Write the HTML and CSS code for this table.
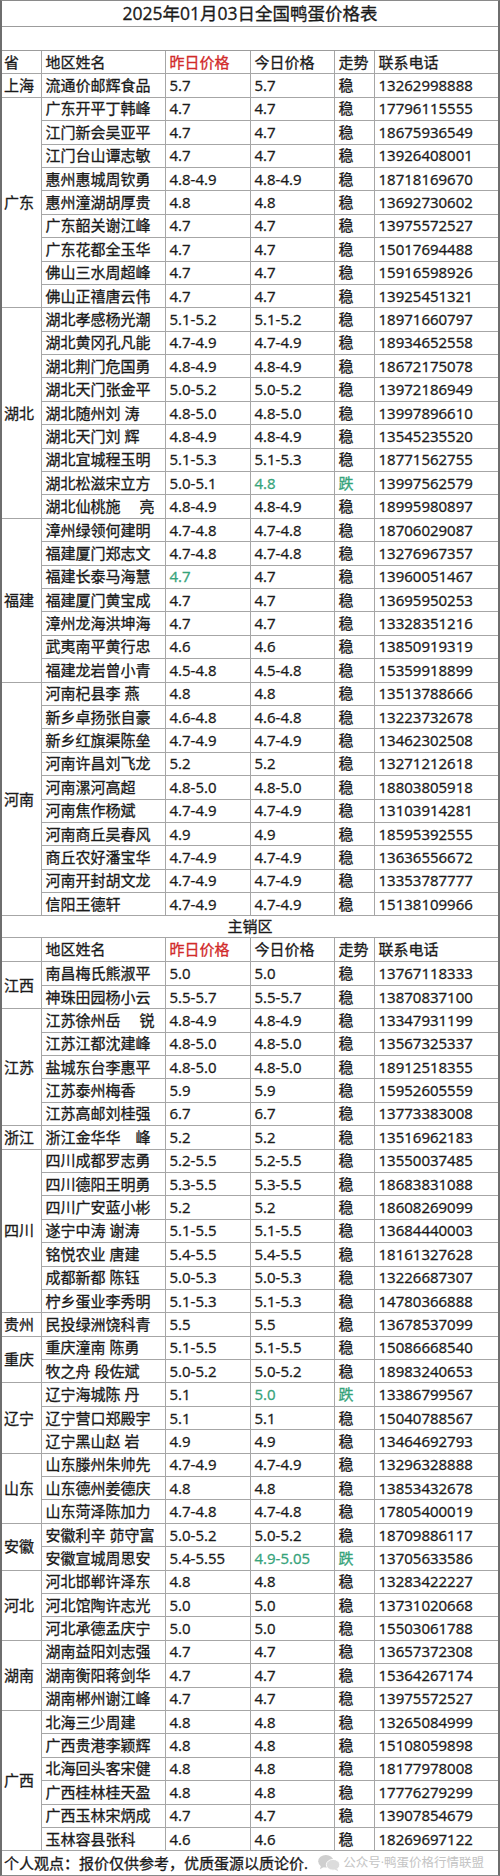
FILE: index.html
```html
<!DOCTYPE html>
<html lang="zh-CN">
<head>
<meta charset="utf-8">
<title>2025年01月03日全国鸭蛋价格表</title>
<link rel="stylesheet" href="styles.css">
</head>
<body>
<div class="sheet">
  <div class="title">2025年01月03日全国鸭蛋价格表</div>
  <div class="blank"></div>

  <div class="grid">
    <div class="c prov">省</div><div class="c">地区姓名</div><div class="c red">昨日价格</div><div class="c">今日价格</div><div class="c">走势</div><div class="c ph">联系电话</div>

    <div class="c prov">上海</div><div class="c">流通价邮辉食品</div><div class="c">5.7</div><div class="c">5.7</div><div class="c">稳</div><div class="c ph">13262998888</div>

    <div class="c prov s9">广东</div>
    <div class="c">广东开平丁韩峰</div><div class="c">4.7</div><div class="c">4.7</div><div class="c">稳</div><div class="c ph">17796115555</div>
    <div class="c">江门新会吴亚平</div><div class="c">4.7</div><div class="c">4.7</div><div class="c">稳</div><div class="c ph">18675936549</div>
    <div class="c">江门台山谭志敏</div><div class="c">4.7</div><div class="c">4.7</div><div class="c">稳</div><div class="c ph">13926408001</div>
    <div class="c">惠州惠城周钦勇</div><div class="c">4.8-4.9</div><div class="c">4.8-4.9</div><div class="c">稳</div><div class="c ph">18718169670</div>
    <div class="c">惠州潼湖胡厚贵</div><div class="c">4.8</div><div class="c">4.8</div><div class="c">稳</div><div class="c ph">13692730602</div>
    <div class="c">广东韶关谢江峰</div><div class="c">4.7</div><div class="c">4.7</div><div class="c">稳</div><div class="c ph">13975572527</div>
    <div class="c">广东花都全玉华</div><div class="c">4.7</div><div class="c">4.7</div><div class="c">稳</div><div class="c ph">15017694488</div>
    <div class="c">佛山三水周超峰</div><div class="c">4.7</div><div class="c">4.7</div><div class="c">稳</div><div class="c ph">15916598926</div>
    <div class="c">佛山正禧唐云伟</div><div class="c">4.7</div><div class="c">4.7</div><div class="c">稳</div><div class="c ph">13925451321</div>

    <div class="c prov s9">湖北</div>
    <div class="c">湖北孝感杨光潮</div><div class="c">5.1-5.2</div><div class="c">5.1-5.2</div><div class="c">稳</div><div class="c ph">18971660797</div>
    <div class="c">湖北黄冈孔凡能</div><div class="c">4.7-4.9</div><div class="c">4.7-4.9</div><div class="c">稳</div><div class="c ph">18934652558</div>
    <div class="c">湖北荆门危国勇</div><div class="c">4.8-4.9</div><div class="c">4.8-4.9</div><div class="c">稳</div><div class="c ph">18672175078</div>
    <div class="c">湖北天门张金平</div><div class="c">5.0-5.2</div><div class="c">5.0-5.2</div><div class="c">稳</div><div class="c ph">13972186949</div>
    <div class="c">湖北随州刘 涛</div><div class="c">4.8-5.0</div><div class="c">4.8-5.0</div><div class="c">稳</div><div class="c ph">13997896610</div>
    <div class="c">湖北天门刘 辉</div><div class="c">4.8-4.9</div><div class="c">4.8-4.9</div><div class="c">稳</div><div class="c ph">13545235520</div>
    <div class="c">湖北宜城程玉明</div><div class="c">5.1-5.3</div><div class="c">5.1-5.3</div><div class="c">稳</div><div class="c ph">18771562755</div>
    <div class="c">湖北松滋宋立方</div><div class="c">5.0-5.1</div><div class="c green">4.8</div><div class="c green">跌</div><div class="c ph">13997562579</div>
    <div class="c">湖北仙桃施　 亮</div><div class="c">4.8-4.9</div><div class="c">4.8-4.9</div><div class="c">稳</div><div class="c ph">18995980897</div>

    <div class="c prov s7">福建</div>
    <div class="c">漳州绿领何建明</div><div class="c">4.7-4.8</div><div class="c">4.7-4.8</div><div class="c">稳</div><div class="c ph">18706029087</div>
    <div class="c">福建厦门郑志文</div><div class="c">4.7-4.8</div><div class="c">4.7-4.8</div><div class="c">稳</div><div class="c ph">13276967357</div>
    <div class="c">福建长泰马海慧</div><div class="c green">4.7</div><div class="c">4.7</div><div class="c">稳</div><div class="c ph">13960051467</div>
    <div class="c">福建厦门黄宝成</div><div class="c">4.7</div><div class="c">4.7</div><div class="c">稳</div><div class="c ph">13695950253</div>
    <div class="c">漳州龙海洪坤海</div><div class="c">4.7</div><div class="c">4.7</div><div class="c">稳</div><div class="c ph">13328351216</div>
    <div class="c">武夷南平黄行忠</div><div class="c">4.6</div><div class="c">4.6</div><div class="c">稳</div><div class="c ph">13850919319</div>
    <div class="c">福建龙岩曾小青</div><div class="c">4.5-4.8</div><div class="c">4.5-4.8</div><div class="c">稳</div><div class="c ph">15359918899</div>

    <div class="c prov s10">河南</div>
    <div class="c">河南杞县李 燕</div><div class="c">4.8</div><div class="c">4.8</div><div class="c">稳</div><div class="c ph">13513788666</div>
    <div class="c">新乡卓扬张自豪</div><div class="c">4.6-4.8</div><div class="c">4.6-4.8</div><div class="c">稳</div><div class="c ph">13223732678</div>
    <div class="c">新乡红旗渠陈垒</div><div class="c">4.7-4.9</div><div class="c">4.7-4.9</div><div class="c">稳</div><div class="c ph">13462302508</div>
    <div class="c">河南许昌刘飞龙</div><div class="c">5.2</div><div class="c">5.2</div><div class="c">稳</div><div class="c ph">13271212618</div>
    <div class="c">河南漯河高超</div><div class="c">4.8-5.0</div><div class="c">4.8-5.0</div><div class="c">稳</div><div class="c ph">18803805918</div>
    <div class="c">河南焦作杨斌</div><div class="c">4.7-4.9</div><div class="c">4.7-4.9</div><div class="c">稳</div><div class="c ph">13103914281</div>
    <div class="c">河南商丘吴春风</div><div class="c">4.9</div><div class="c">4.9</div><div class="c">稳</div><div class="c ph">18595392555</div>
    <div class="c">商丘农好潘宝华</div><div class="c">4.7-4.9</div><div class="c">4.7-4.9</div><div class="c">稳</div><div class="c ph">13636556672</div>
    <div class="c">河南开封胡文龙</div><div class="c">4.7-4.9</div><div class="c">4.7-4.9</div><div class="c">稳</div><div class="c ph">13353787777</div>
    <div class="c">信阳王德轩</div><div class="c">4.7-4.9</div><div class="c">4.7-4.9</div><div class="c">稳</div><div class="c ph">15138109966</div>
  </div>

  <div class="section">主销区</div>

  <div class="grid grid-b">
    <div class="c prov"></div><div class="c">地区姓名</div><div class="c red">昨日价格</div><div class="c">今日价格</div><div class="c">走势</div><div class="c ph">联系电话</div>

    <div class="c prov s2">江西</div>
    <div class="c">南昌梅氏熊淑平</div><div class="c">5.0</div><div class="c">5.0</div><div class="c">稳</div><div class="c ph">13767118333</div>
    <div class="c">神珠田园杨小云</div><div class="c">5.5-5.7</div><div class="c">5.5-5.7</div><div class="c">稳</div><div class="c ph">13870837100</div>

    <div class="c prov s5">江苏</div>
    <div class="c">江苏徐州岳　 锐</div><div class="c">4.8-4.9</div><div class="c">4.8-4.9</div><div class="c">稳</div><div class="c ph">13347931199</div>
    <div class="c">江苏江都沈建峰</div><div class="c">4.8-5.0</div><div class="c">4.8-5.0</div><div class="c">稳</div><div class="c ph">13567325337</div>
    <div class="c">盐城东台李惠平</div><div class="c">4.8-5.0</div><div class="c">4.8-5.0</div><div class="c">稳</div><div class="c ph">18912518355</div>
    <div class="c">江苏泰州梅香</div><div class="c">5.9</div><div class="c">5.9</div><div class="c">稳</div><div class="c ph">15952605559</div>
    <div class="c">江苏高邮刘桂强</div><div class="c">6.7</div><div class="c">6.7</div><div class="c">稳</div><div class="c ph">13773383008</div>

    <div class="c prov">浙江</div>
    <div class="c">浙江金华华　峰</div><div class="c">5.2</div><div class="c">5.2</div><div class="c">稳</div><div class="c ph">13516962183</div>

    <div class="c prov s7">四川</div>
    <div class="c">四川成都罗志勇</div><div class="c">5.2-5.5</div><div class="c">5.2-5.5</div><div class="c">稳</div><div class="c ph">13550037485</div>
    <div class="c">四川德阳王明勇</div><div class="c">5.3-5.5</div><div class="c">5.3-5.5</div><div class="c">稳</div><div class="c ph">18683831088</div>
    <div class="c">四川广安蓝小彬</div><div class="c">5.2</div><div class="c">5.2</div><div class="c">稳</div><div class="c ph">18608269099</div>
    <div class="c">遂宁中涛 谢涛</div><div class="c">5.1-5.5</div><div class="c">5.1-5.5</div><div class="c">稳</div><div class="c ph">13684440003</div>
    <div class="c">铭悦农业 唐建</div><div class="c">5.4-5.5</div><div class="c">5.4-5.5</div><div class="c">稳</div><div class="c ph">18161327628</div>
    <div class="c">成都新都 陈钰</div><div class="c">5.0-5.3</div><div class="c">5.0-5.3</div><div class="c">稳</div><div class="c ph">13226687307</div>
    <div class="c">柠乡蛋业李秀明</div><div class="c">5.1-5.3</div><div class="c">5.1-5.3</div><div class="c">稳</div><div class="c ph">14780366888</div>

    <div class="c prov">贵州</div>
    <div class="c">民投绿洲饶科青</div><div class="c">5.5</div><div class="c">5.5</div><div class="c">稳</div><div class="c ph">13678537099</div>

    <div class="c prov s2">重庆</div>
    <div class="c">重庆潼南 陈勇</div><div class="c">5.1-5.5</div><div class="c">5.1-5.5</div><div class="c">稳</div><div class="c ph">15086668540</div>
    <div class="c">牧之舟 段佐斌</div><div class="c">5.0-5.2</div><div class="c">5.0-5.2</div><div class="c">稳</div><div class="c ph">18983240653</div>

    <div class="c prov s3">辽宁</div>
    <div class="c">辽宁海城陈 丹</div><div class="c">5.1</div><div class="c green">5.0</div><div class="c green">跌</div><div class="c ph">13386799567</div>
    <div class="c">辽宁营口郑殿宇</div><div class="c">5.1</div><div class="c">5.1</div><div class="c">稳</div><div class="c ph">15040788567</div>
    <div class="c">辽宁黑山赵 岩</div><div class="c">4.9</div><div class="c">4.9</div><div class="c">稳</div><div class="c ph">13464692793</div>

    <div class="c prov s3">山东</div>
    <div class="c">山东滕州朱帅先</div><div class="c">4.7-4.9</div><div class="c">4.7-4.9</div><div class="c">稳</div><div class="c ph">13296328888</div>
    <div class="c">山东德州姜德庆</div><div class="c">4.8</div><div class="c">4.8</div><div class="c">稳</div><div class="c ph">13853432678</div>
    <div class="c">山东菏泽陈加力</div><div class="c">4.7-4.8</div><div class="c">4.7-4.8</div><div class="c">稳</div><div class="c ph">17805400019</div>

    <div class="c prov s2">安徽</div>
    <div class="c">安徽利辛 茆守富</div><div class="c">5.0-5.2</div><div class="c">5.0-5.2</div><div class="c">稳</div><div class="c ph">18709886117</div>
    <div class="c">安徽宣城周思安</div><div class="c">5.4-5.55</div><div class="c green">4.9-5.05</div><div class="c green">跌</div><div class="c ph">13705633586</div>

    <div class="c prov s3">河北</div>
    <div class="c">河北邯郸许泽东</div><div class="c">4.8</div><div class="c">4.8</div><div class="c">稳</div><div class="c ph">13283422227</div>
    <div class="c">河北馆陶许志光</div><div class="c">5.0</div><div class="c">5.0</div><div class="c">稳</div><div class="c ph">13731020668</div>
    <div class="c">河北承德孟庆宁</div><div class="c">5.0</div><div class="c">5.0</div><div class="c">稳</div><div class="c ph">15503061788</div>

    <div class="c prov s3">湖南</div>
    <div class="c">湖南益阳刘志强</div><div class="c">4.7</div><div class="c">4.7</div><div class="c">稳</div><div class="c ph">13657372308</div>
    <div class="c">湖南衡阳蒋剑华</div><div class="c">4.7</div><div class="c">4.7</div><div class="c">稳</div><div class="c ph">15364267174</div>
    <div class="c">湖南郴州谢江峰</div><div class="c">4.7</div><div class="c">4.7</div><div class="c">稳</div><div class="c ph">13975572527</div>

    <div class="c prov s6">广西</div>
    <div class="c">北海三少周建</div><div class="c">4.8</div><div class="c">4.8</div><div class="c">稳</div><div class="c ph">13265084999</div>
    <div class="c">广西贵港李颖辉</div><div class="c">4.8</div><div class="c">4.8</div><div class="c">稳</div><div class="c ph">15108059898</div>
    <div class="c">北海回头客宋健</div><div class="c">4.8</div><div class="c">4.8</div><div class="c">稳</div><div class="c ph">18177978008</div>
    <div class="c">广西桂林桂天盈</div><div class="c">4.8</div><div class="c">4.8</div><div class="c">稳</div><div class="c ph">17776279299</div>
    <div class="c">广西玉林宋炳成</div><div class="c">4.7</div><div class="c">4.7</div><div class="c">稳</div><div class="c ph">13907854679</div>
    <div class="c">玉林容县张科</div><div class="c">4.6</div><div class="c">4.6</div><div class="c">稳</div><div class="c ph">18269697122</div>
  </div>

  <div class="footer">
    <span class="note">个人观点：报价仅供参考，优质蛋源以质论价.</span>
    <span class="mark">
      <svg class="wx" viewBox="0 0 26 20" width="24" height="18" aria-hidden="true">
        <ellipse cx="9.5" cy="8" rx="8.5" ry="7" fill="#cfcfcf"/>
        <path d="M4 13 L3 17 L8 14 Z" fill="#cfcfcf"/>
        <ellipse cx="17.5" cy="12" rx="7.5" ry="6" fill="#dcdcdc" stroke="#fff" stroke-width="1"/>
        <path d="M22 16 L23.5 19.5 L19 17 Z" fill="#dcdcdc"/>
      </svg>
      公众号·鸭蛋价格行情联盟
    </span>
  </div>
</div>
</body>
</html>
```

FILE: styles.css
```css
html, body {
  margin: 0;
  padding: 0;
  background: #ffffff;
}

body {
  font-family: "Open Sans", "Noto Sans CJK SC", sans-serif;
  font-size: 15px;
  color: #1a1a1a;
  -webkit-text-stroke: 0.3px currentColor;
}

.sheet {
  width: 500px;
  box-sizing: border-box;
  border-left: 2px solid #6e6e6e;
  border-right: 2px solid #6e6e6e;
  border-top: 1px solid #8a8a8a;
  border-bottom: 1px solid #8a8a8a;
}

.title {
  height: 25px;
  border-bottom: 1px solid #9c9c9c;
  display: flex;
  align-items: center;
  justify-content: center;
  font-size: 17.5px;
  line-height: 1;
}

.blank {
  height: 23px;
  border-bottom: 1px solid #9c9c9c;
}

.grid {
  display: grid;
  grid-template-columns: 40px 124px 85px 84px 40px 1fr;
  grid-auto-rows: 23.4px;
}

.grid-b {
  grid-template-rows: 24px;
}

.c {
  box-sizing: border-box;
  border-right: 1px solid #a6a6a6;
  border-bottom: 1px solid #a6a6a6;
  display: flex;
  align-items: center;
  padding-left: 3.5px;
  white-space: nowrap;
  overflow: hidden;
  line-height: 1;
}

.c.ph {
  border-right: none;
}

.prov {
  grid-column: 1;
  padding-left: 2px;
}

.s2 { grid-row: span 2; }
.s3 { grid-row: span 3; }
.s5 { grid-row: span 5; }
.s6 { grid-row: span 6; }
.s7 { grid-row: span 7; }
.s9 { grid-row: span 9; }
.s10 { grid-row: span 10; }

.red {
  color: #d12a2a;
}

.green {
  color: #36a37a;
}

.section {
  height: 21px;
  border-bottom: 1px solid #a6a6a6;
  display: flex;
  align-items: center;
  justify-content: center;
  line-height: 1;
}

.footer {
  height: 24px;
  display: flex;
  align-items: center;
  justify-content: space-between;
  padding-left: 2px;
  padding-right: 14px;
  line-height: 1;
}

.mark {
  display: flex;
  align-items: center;
  gap: 2px;
  font-size: 12.5px;
  color: #c4c4c4;
  -webkit-text-stroke: 0;
}

.wx {
  display: block;
}
```
